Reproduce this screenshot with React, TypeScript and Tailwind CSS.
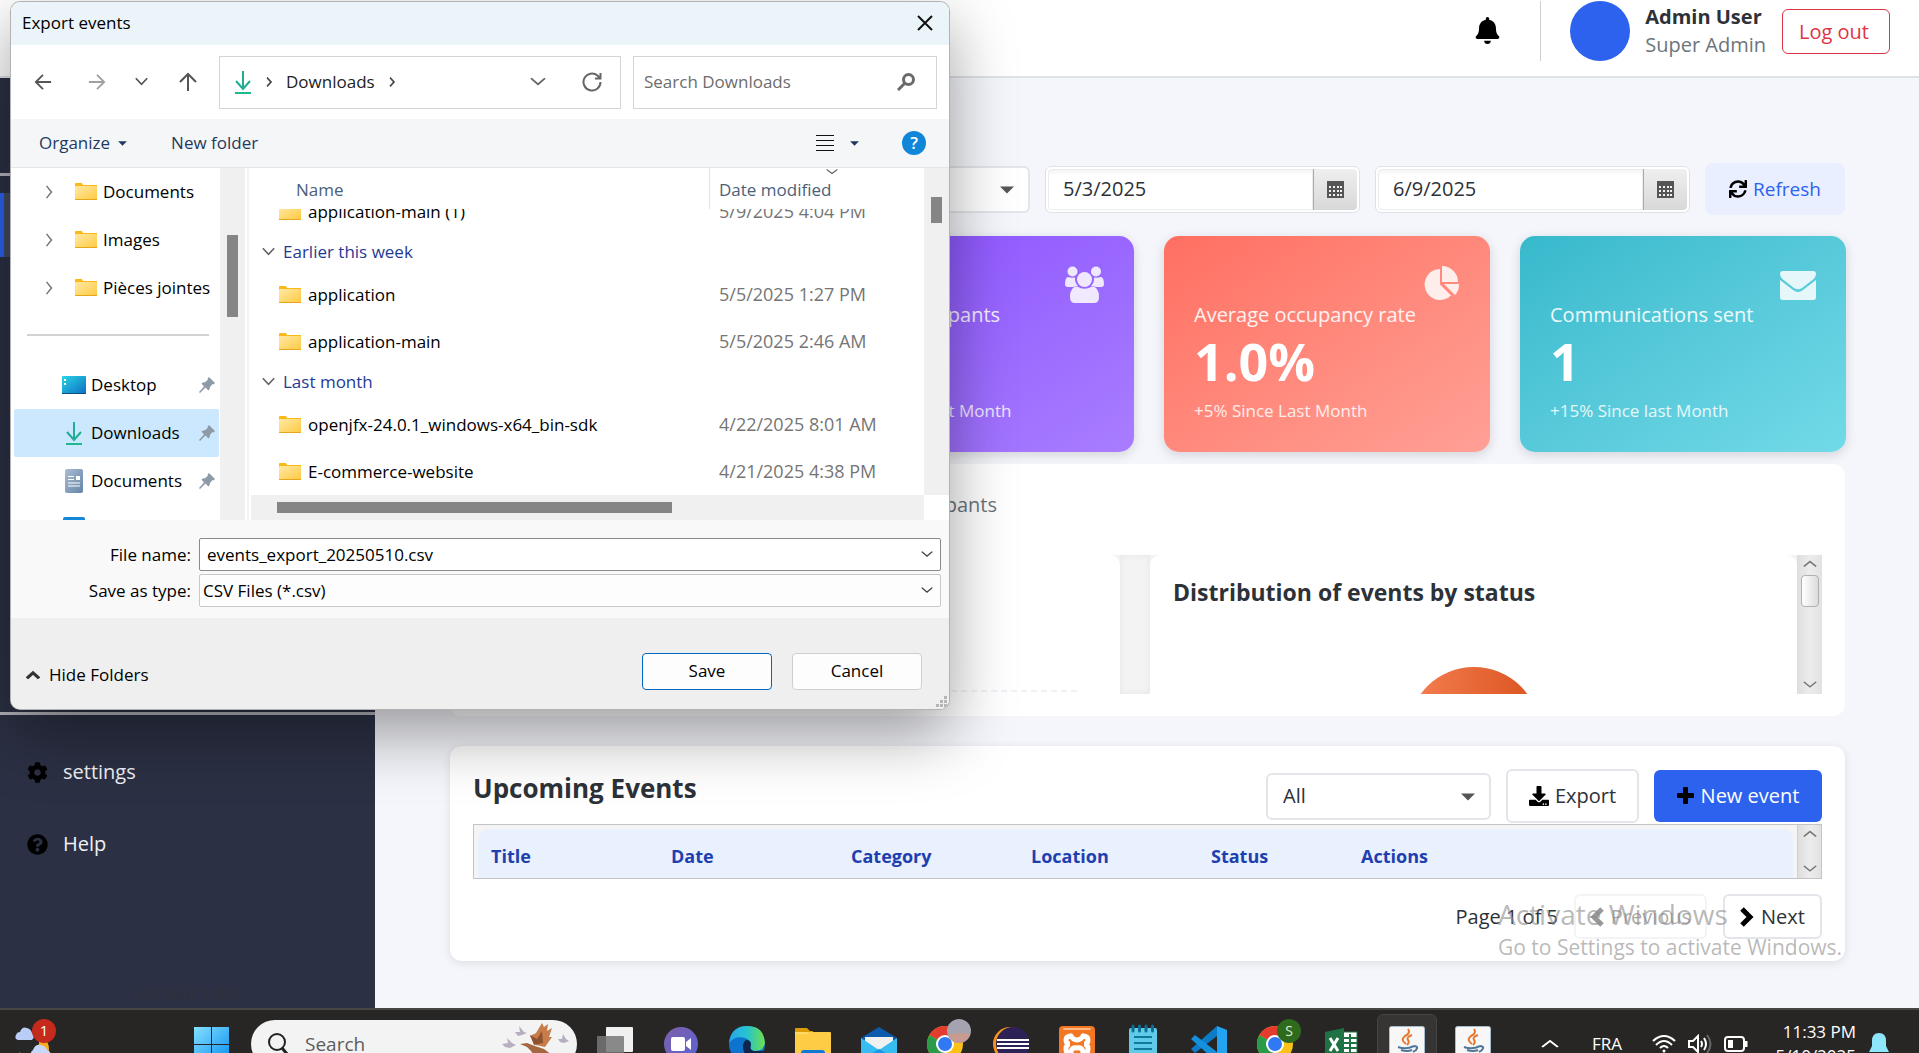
import React from "react";
import { FaBell, FaSync, FaDownload, FaCog, FaQuestionCircle } from "react-icons/fa";

type IconProps = { className?: string };

/* ---------- small glyphs ---------- */

function Chevron({ dir, className = "", stroke = 1 }: { dir: "up" | "down" | "right"; className?: string; stroke?: number }) {
  const d = dir === "down" ? "M1 3 L8 11 L15 3" : dir === "up" ? "M1 12 L8 4 L15 12" : "M4 1 L12 8 L4 15";
  return (
    <svg viewBox="0 0 16 16" className={className} fill="none" stroke="currentColor" strokeWidth={stroke} aria-hidden="true" preserveAspectRatio="none">
      <path d={d} />
    </svg>
  );
}

function BoldChevron({ dir }: { dir: "left" | "right" }) {
  return (
    <svg viewBox="0 0 14 20" className="h-5 w-[14px] text-black" fill="none" stroke="currentColor" strokeWidth="5" strokeLinejoin="miter" aria-hidden="true">
      <path d={dir === "left" ? "M12 2 L4 10 L12 18" : "M2 2 L10 10 L2 18"} />
    </svg>
  );
}

function BoldPlus() {
  return (
    <svg viewBox="0 0 18 18" className="h-[18px] w-[18px] text-black" fill="currentColor" aria-hidden="true">
      <rect x="6" y="0" width="5" height="17" rx="1" />
      <rect x="0" y="6" width="17" height="5" rx="1" />
    </svg>
  );
}

function Caret({ className = "" }: IconProps) {
  return (
    <svg viewBox="0 0 14 8" className={className} fill="currentColor" aria-hidden="true">
      <path d="M0 0.5 H14 L7 7.5 Z" />
    </svg>
  );
}

function Arrow({ rotate = 0, className = "" }: { rotate?: number; className?: string }) {
  return (
    <svg viewBox="0 0 20 20" className={className} fill="none" stroke="currentColor" strokeWidth="2" aria-hidden="true">
      <path transform={`rotate(${rotate} 10 10)`} d="M19 10 H2 M10 2 L2 10 L10 18" />
    </svg>
  );
}

function Folder() {
  return (
    <svg viewBox="0 0 22 18" className="h-[18px] w-[22px] shrink-0" aria-hidden="true">
      <defs>
        <linearGradient id="folderFace" x1="0" y1="0" x2="1" y2="1">
          <stop offset="0" stopColor="#ffe9a6" />
          <stop offset="1" stopColor="#ffc93f" />
        </linearGradient>
      </defs>
      <path d="M0 1 Q0 0 1 0 H7 L8 2 H22 V6 H0Z" fill="#fbb917" />
      <rect x="0" y="3" width="22" height="14" rx="1" fill="url(#folderFace)" />
      <rect x="0" y="16" width="22" height="1" fill="#e8a61c" />
    </svg>
  );
}

function DownloadArrow({ className = "" }: IconProps) {
  return (
    <svg viewBox="0 0 16 23" className={className} fill="none" strokeWidth="2" aria-hidden="true">
      <path d="M8 0 V17 M1 10 L8 18 L15 10" stroke="#1fae93" />
      <path d="M0 22 H16" stroke="#1db98a" />
    </svg>
  );
}

function DesktopIcon() {
  return (
    <svg viewBox="0 0 24 18" className="h-[18px] w-6" aria-hidden="true">
      <defs>
        <linearGradient id="desk" x1="0" y1="0" x2="1" y2="1">
          <stop offset="0" stopColor="#2cd3e4" />
          <stop offset="1" stopColor="#0a6fc4" />
        </linearGradient>
      </defs>
      <rect width="24" height="18" rx="1" fill="url(#desk)" />
      <rect y="17" width="24" height="1" fill="#0b4f86" />
      <path d="M2 3 h2 v2 h-2z M2 7 h2 v2 h-2z" fill="#fff" />
    </svg>
  );
}

function DocIcon() {
  return (
    <svg viewBox="0 0 18 24" className="h-6 w-[18px]" aria-hidden="true">
      <defs>
        <linearGradient id="doc" x1="0" y1="0" x2="1" y2="1">
          <stop offset="0" stopColor="#a9bdd2" />
          <stop offset="1" stopColor="#6585a8" />
        </linearGradient>
      </defs>
      <rect width="18" height="24" rx="2" fill="url(#doc)" />
      <path d="M3 7.5h6M3 10.5h6M3 14h12M3 17h12" stroke="#fff" />
      <rect x="11" y="7" width="4" height="4" fill="#fff" />
    </svg>
  );
}

function Pin() {
  return (
    <svg viewBox="0 0 16 16" className="h-4 w-4" fill="#8e9ba6" aria-hidden="true">
      <path d="M10 0 L16 6 L14.500 7.500 L13.500 7 L11 10 Q11 12 9.500 13.500 L6.500 10.500 L1 16 L0 15 L5 9.500 L2.500 6.500 Q4 5 6 5.200 L9 2.500 L8.500 1.500Z" />
    </svg>
  );
}

function CalendarIcon() {
  return (
    <svg viewBox="0 0 17 17" className="h-[17px] w-[17px]" aria-hidden="true">
      <rect width="17" height="17" fill="#555" />
      <g fill="#f2f2f2">
        {[5, 9, 13].map((y) => [2, 6, 10, 13].map((x) => <rect key={`${x}-${y}`} x={x} y={y} width="2" height="2" />))}
      </g>
    </svg>
  );
}

/* ---------- stat card drawings ---------- */

function PeopleIcon() {
  return (
    <svg viewBox="0 0 39 37" className="h-[37px] w-[39px]" fill="currentColor" aria-hidden="true">
      <circle cx="7.500" cy="5.500" r="5" />
      <circle cx="31" cy="5.500" r="5" />
      <circle cx="19.500" cy="13.500" r="7.500" />
      <path d="M3 11 Q6 12 10 11.500 Q9.500 17 13 20 Q10 20.500 8 21 H3 Q0 21 0 18 Q0 12 3 11Z" />
      <path d="M36 11 Q33 12 29 11.500 Q29.500 17 26 20 Q29 20.500 31 21 H36 Q39 21 39 18 Q39 12 36 11Z" />
      <path d="M12 20.500 Q19.500 25 27 20.500 Q34 21 34 31 Q34 37 29 37 H10 Q5 37 5 31 Q5 21 12 20.500Z" />
    </svg>
  );
}

function PieIcon() {
  return (
    <svg viewBox="0 0 36 36" className="h-9 w-9" fill="currentColor" aria-hidden="true">
      <path d="M16 3 A15.500 15.500 0 1 0 27 29.500 L16 18.500Z" />
      <path d="M18 0 A16 16 0 0 1 34 16 H18Z" />
      <path d="M20 18 H35 A15 15 0 0 1 31 29Z" />
    </svg>
  );
}

function MailIcon() {
  return (
    <svg viewBox="0 0 36 36" className="h-9 w-9" fill="currentColor" aria-hidden="true">
      <path d="M3 5 H33 Q36 5 36 8 Q36 11 33 13.500 L22 22 Q18 24.500 14 22 L3 13.500 Q0 11 0 8 Q0 5 3 5Z" />
      <path d="M0 14 L13 24 Q18 28 23 24 L36 14 V31 Q36 34 33 34 H3 Q0 34 0 31Z" />
    </svg>
  );
}

/* ---------- dashboard ---------- */

function Header() {
  return (
    <header className="flex h-[78px] shrink-0 items-start justify-end border-b-2 border-[#dfe2e6] bg-white pr-[29px] pt-px">
      <button type="button" aria-label="Notifications" className="mr-10 mt-4 text-black">
        <FaBell className="h-[27px] w-[25px]" />
      </button>
      <div className="mr-[29px] h-[60px] w-px bg-[#cfcfcf]" />
      <div className="h-[60px] w-[60px] rounded-full bg-[#2c62ee]" />
      <div className="ml-[15px] text-[20px] leading-7">
        <p className="mt-0.5 font-bold text-[#2d3138]">Admin User</p>
        <p className="text-[#6c757d]">Super Admin</p>
      </div>
      <button type="button" className="ml-4 mt-2 h-[45px] w-[108px] rounded-md border border-[#dc3545] pr-1 text-[20px] text-[#dc3545]">
        Log out
      </button>
    </header>
  );
}

function Sidebar() {
  return (
    <nav className="flex w-[375px] shrink-0 flex-col bg-[#2b3044] text-[20px] text-[#f0f1f4]">
      <div className="mt-[95px] h-[3px] bg-[#b3b5bb]" />
      <div className="mt-[17px] h-16 border-l-4 border-[#2c62ee] bg-[#434860]" />
      <div className="mb-[21px] mt-auto h-[3px] shrink-0 bg-[#b3b5bb]" />
      <a href="#settings" className="flex h-[72px] shrink-0 items-center gap-[15px] pl-[27px]">
        <FaCog className="h-[21px] w-[21px] text-black" />
        settings
      </a>
      <a href="#help" className="flex h-[72px] shrink-0 items-center gap-[15px] pl-[27px]">
        <FaQuestionCircle className="h-[21px] w-[21px] text-black" />
        Help
      </a>
      <p className="mt-[100px] pb-px text-center text-[17px] leading-[27px] text-[#2d3138]">Version 1.0.0</p>
    </nav>
  );
}

function Combo({ label, value, options }: { label: string; value: string; options: string[] }) {
  return (
    <div className="relative w-[225px]">
      <select
        aria-label={label}
        defaultValue={value}
        className="h-[47px] w-full appearance-none rounded-md border-2 border-[#e3e5ea] bg-white px-[15px] text-[20px] text-[#2d3138]"
      >
        {options.map((o) => (
          <option key={o}>{o}</option>
        ))}
      </select>
      <Caret className="pointer-events-none absolute right-4 top-5 h-2 w-[14px] text-[#555]" />
    </div>
  );
}

function DateField({ label, value }: { label: string; value: string }) {
  return (
    <div className="flex h-[47px] w-[315px] rounded-md border border-[#dee2e8] bg-white p-0.5">
      <input
        aria-label={label}
        defaultValue={value}
        className="min-w-0 flex-1 rounded-l border border-[#ececec] bg-linear-to-b from-[#f4f4f4] from-0% to-white to-15% px-[14px] text-[20px] text-[#2d3138]"
      />
      <button
        type="button"
        aria-label={`${label} calendar`}
        className="flex w-11 items-center justify-center rounded-r border-l border-[#aaa] bg-linear-to-b from-[#efefef] to-[#d8d8d8]"
      >
        <CalendarIcon />
      </button>
    </div>
  );
}

function StatCard({ title, value, note, tone, icon }: { title: string; value: string; note: string; tone: string; icon: React.ReactNode }) {
  return (
    <article className={`rounded-[15px] px-[30px] pb-7 pt-[30px] text-white shadow-[0_3px_12px_rgba(0,0,0,0.14)] ${tone}`}>
      <div className="flex h-9 justify-end text-white/85">{icon}</div>
      <h3 className="text-[20px] leading-[26px] text-white/90">{title}</h3>
      <p className="text-[52px] font-bold leading-[66px]">{value}</p>
      <p className="mt-1 text-[17px] leading-[26px] text-white/85">{note}</p>
    </article>
  );
}

function ChartsPanel() {
  return (
    <section className="mr-px mt-3 rounded-xl bg-white px-[23px] pb-[22px]">
      <div className="flex h-[91px] w-[524px] items-start justify-end gap-10 pt-7 text-[20px] leading-[26px] text-[#6c757d]">
        <span>Events</span>
        <span>Participants</span>
      </div>
      <div className="flex h-[139px] overflow-hidden bg-[#f3f3f3]">
        <div className="flex flex-1 items-end rounded-t-[10px] bg-white pb-[2px] pl-10 pr-[43px]">
          <div className="h-0 flex-1 border-t-2 border-dashed border-[#f0f0f6]" />
        </div>
        <div className="w-[30px] shadow-[inset_0_0_6px_rgba(0,0,0,0.06)]" />
        <div className="flex w-[647px] flex-col rounded-t-[10px] bg-white px-[23px] pt-[21px]">
          <h3 className="text-[23px] font-bold leading-8 text-[#2d3138]">Distribution of events by status</h3>
          <svg viewBox="0 0 132 132" className="mt-[59px] h-[132px] w-[132px] shrink-0 self-center" role="img" aria-label="Events by status">
            <defs>
              <linearGradient id="pie" x1="0" y1="0" x2="1" y2="0">
                <stop offset="0" stopColor="#f57f52" />
                <stop offset="1" stopColor="#d9531e" />
              </linearGradient>
            </defs>
            <circle cx="66" cy="66" r="66" fill="url(#pie)" />
          </svg>
        </div>
        <div className="flex w-[25px] flex-col items-center bg-linear-to-r from-[#dedede] via-[#ececec] to-[#e2e2e2] py-1 text-[#777]">
          <Chevron dir="up" className="h-[10px] w-[14px]" stroke={2} />
          <div className="mt-[6px] h-8 w-[18px] rounded border border-[#b0b0b0] bg-linear-to-r from-white to-[#dcdcdc]" />
          <Chevron dir="down" className="mt-auto h-[10px] w-[14px]" stroke={2} />
        </div>
      </div>
    </section>
  );
}

const columns: [string, string][] = [
  ["Title", "w-[180px]"],
  ["Date", "w-[180px]"],
  ["Category", "w-[180px]"],
  ["Location", "w-[180px]"],
  ["Status", "w-[150px]"],
  ["Actions", ""],
];

function EventsPanel() {
  return (
    <section className="mr-px mt-[30px] rounded-xl bg-white px-[23px] pb-[22px] pt-[23px] shadow-[0_2px_10px_rgba(0,0,0,0.1)]">
      <div className="flex items-center gap-[15px]">
        <h2 className="mr-auto self-start text-[26px] font-bold leading-[38px] text-[#2d3138]">Upcoming Events</h2>
        <Combo label="Category filter" value="All" options={["All"]} />
        <button type="button" className="flex h-[54px] w-[133px] items-center justify-center gap-1.5 rounded-md border-2 border-[#e3e5ea] text-[20px] text-[#2d3138]">
          <FaDownload className="h-5 w-5 text-black" />
          Export
        </button>
        <button type="button" className="flex h-[52px] w-[168px] items-center justify-center gap-1.5 rounded-md bg-[#2c62ee] text-[20px] text-white">
          <BoldPlus />
          New event
        </button>
      </div>
      <div className="mt-px flex h-[55px] overflow-hidden border border-[#c4c4c4] bg-[#f4f4f4]">
        <div className="flex-1 overflow-hidden pl-1 pr-[4px] pt-[4px]">
          <div className="overflow-hidden rounded-t-[10px] bg-[#e9f0fe]">
            <table className="h-[55px] w-full table-fixed text-left text-[18px] text-[#1e40af]">
              <thead>
                <tr>
                  {columns.map(([name, width]) => (
                    <th key={name} scope="col" className={`pl-[13px] font-bold ${width}`}>
                      {name}
                    </th>
                  ))}
                </tr>
              </thead>
            </table>
          </div>
        </div>
        <div className="flex w-6 flex-col items-center justify-between border-l border-[#d0d0d0] bg-linear-to-r from-[#dedede] via-[#ececec] to-[#e2e2e2] py-1 text-[#777]">
          <Chevron dir="up" className="h-[10px] w-[14px]" stroke={2} />
          <Chevron dir="down" className="h-[10px] w-[14px]" stroke={2} />
        </div>
      </div>
      <div className="mt-[15px] flex items-center justify-end gap-4 text-[20px] text-[#2d3138]">
        <span>Page 1 of 5</span>
        <button type="button" disabled className="flex h-[45px] w-[133px] items-center justify-center gap-[7px] rounded-md border-2 border-[#e3e5ea] opacity-40">
          <BoldChevron dir="left" />
          Previous
        </button>
        <button type="button" className="flex h-[45px] w-[99px] items-center justify-center gap-[7px] rounded-md border-2 border-[#e3e5ea]">
          <BoldChevron dir="right" />
          Next
        </button>
      </div>
    </section>
  );
}

function Dashboard() {
  return (
    <main className="min-w-0 flex-1 bg-[#f5f6fb] pl-[75px] pr-[73px] pt-[85px]">
      <div className="mr-px flex items-center justify-end gap-[15px]">
        <Combo label="Period" value="All periods" options={["All periods"]} />
        <DateField label="From" value="5/3/2025" />
        <DateField label="To" value="6/9/2025" />
        <button type="button" className="flex h-[52px] w-[140px] items-center justify-center gap-1.5 rounded-lg bg-[#e9effe] text-[19px] text-[#2c62ee]">
          <FaSync className="h-[18px] w-[18px] text-black" />
          Refresh
        </button>
      </div>
      <div className="ml-0.5 mt-[21px] grid grid-cols-4 gap-[30px]">
        <StatCard title="Total events" value="5" note="+12% Since Last Month" tone="bg-linear-to-br from-[#2c62ee] to-[#6a93f8]" icon={null} />
        <StatCard title="Total participants" value="1" note="+8% Since Last Month" tone="bg-linear-to-br from-[#8a4dff] to-[#a97dff]" icon={<PeopleIcon />} />
        <StatCard title="Average occupancy rate" value="1.0%" note="+5% Since Last Month" tone="bg-linear-to-br from-[#ff6f61] to-[#ffa096]" icon={<PieIcon />} />
        <StatCard title="Communications sent" value="1" note="+15% Since last Month" tone="bg-linear-to-br from-[#36b9cc] to-[#72dae8]" icon={<MailIcon />} />
      </div>
      <ChartsPanel />
      <EventsPanel />
    </main>
  );
}

/* ---------- save dialog ---------- */

function TreeRow({ children, selected = false, chevron = false }: { children: React.ReactNode; selected?: boolean; chevron?: boolean }) {
  return (
    <button
      type="button"
      className={`flex h-12 w-full shrink-0 items-center rounded-xs whitespace-nowrap ${selected ? "bg-[#cce8ff]" : ""} ${chevron ? "pl-[30px]" : "pl-12"}`}
    >
      {children}
    </button>
  );
}

function FolderTree() {
  return (
    <div className="flex w-[209px] shrink-0 flex-col overflow-hidden pl-[3px] pr-px">
      {["Documents", "Images", "Pièces jointes"].map((name) => (
        <TreeRow key={name} chevron>
          <Chevron dir="right" className="mr-[21px] h-[14px] w-[10px] text-[#777]" stroke={2} />
          <Folder />
          <span className="ml-1.5">{name}</span>
        </TreeRow>
      ))}
      <div className="mb-[25px] ml-[13px] mr-[10px] mt-[22px] h-0.5 shrink-0 bg-[#d2d2d2]" />
      {[
        { name: "Desktop", icon: <DesktopIcon />, selected: false },
        { name: "Downloads", icon: <DownloadArrow className="h-[23px] w-4" />, selected: true },
        { name: "Documents", icon: <DocIcon />, selected: false },
      ].map((r) => (
        <TreeRow key={r.name} selected={r.selected}>
          <span className="flex w-6 justify-center">{r.icon}</span>
          <span className="ml-[5px]">{r.name}</span>
          <span className="ml-auto mr-1">
            <Pin />
          </span>
        </TreeRow>
      ))}
      <div className="ml-[49px] mt-3 h-5 w-[22px] shrink-0 rounded-xs bg-[#1488d8]" />
    </div>
  );
}

function FileRow({ name, date }: { name: string; date: string }) {
  return (
    <div className="flex h-[47px] shrink-0 items-center pl-7">
      <Folder />
      <span className="ml-[7px] w-[411px]">{name}</span>
      <span className="text-[18px] text-[#757575]">{date}</span>
    </div>
  );
}

function GroupRow({ name }: { name: string }) {
  return (
    <div className="flex h-9 shrink-0 items-center gap-2 pb-0.5 pl-[11px] text-[#1f3a93]">
      <Chevron dir="down" className="h-3 w-[13px] text-[#666]" stroke={2} />
      {name}
    </div>
  );
}

function FileList() {
  return (
    <div className="flex min-w-0 flex-1">
      <div className="flex min-w-0 flex-1 flex-col">
        <div className="flex h-[41px] shrink-0 text-[#4c607a]">
          <div className="w-[459px] border-r border-[#e2e2e2] pl-[45px] pt-[9px]">Name</div>
          <div className="relative flex-1 pl-[9px] pt-[9px]">
            Date modified
            <Chevron dir="down" className="absolute left-[116px] top-0 h-2 w-3 text-[#555]" stroke={2} />
          </div>
        </div>
        <div className="flex min-h-0 flex-1 flex-col justify-end overflow-hidden">
          <FileRow name="application-main (1)" date="5/9/2025 4:04 PM" />
          <GroupRow name="Earlier this week" />
          <FileRow name="application" date="5/5/2025 1:27 PM" />
          <FileRow name="application-main" date="5/5/2025 2:46 AM" />
          <GroupRow name="Last month" />
          <FileRow name="openjfx-24.0.1_windows-x64_bin-sdk" date="4/22/2025 8:01 AM" />
          <FileRow name="E-commerce-website" date="4/21/2025 4:38 PM" />
        </div>
        <div className="flex h-[25px] shrink-0 items-center bg-[#f0f0f0] pl-[26px]">
          <div className="h-[11px] w-[395px] bg-[#858585]" />
        </div>
      </div>
      <div className="mb-[25px] w-[25px] shrink-0 bg-[#f0f0f0] pl-[7px] pt-[29px]">
        <div className="h-[26px] w-[11px] bg-[#858585]" />
      </div>
    </div>
  );
}

function SaveDialog() {
  return (
    <div
      role="dialog"
      aria-label="Export events"
      className="absolute left-2.5 top-px flex w-[940px] flex-col overflow-hidden rounded-[10px] border border-black/30 bg-white text-[17px] text-black shadow-[0_24px_64px_rgba(0,0,0,0.38)]"
    >
      <div className="flex h-[43px] items-center justify-between bg-[#ebf4f8] pb-0.5 pl-[11px] pr-4">
        Export events
        <button type="button" aria-label="Close">
          <svg viewBox="0 0 16 16" className="h-4 w-4" stroke="#111" strokeWidth="2" aria-hidden="true">
            <path d="M1 1 L15 15 M15 1 L1 15" />
          </svg>
        </button>
      </div>

      <div className="flex h-[74px] items-center pl-[23px] pr-3">
        <button type="button" aria-label="Back" className="text-[#555]"><Arrow className="h-[18px] w-[18px]" /></button>
        <button type="button" aria-label="Forward" className="ml-9 text-[#a0a0a0]"><Arrow rotate={180} className="h-[18px] w-[18px]" /></button>
        <button type="button" aria-label="Recent" className="ml-[29px] text-[#555]"><Chevron dir="down" className="h-3 w-[13px]" stroke={2} /></button>
        <button type="button" aria-label="Up" className="ml-[30px] text-[#555]"><Arrow rotate={90} className="h-5 w-5" /></button>
        <div className="ml-[21px] flex h-[53px] w-[402px] items-center border border-[#d5d5d5] pl-[15px]">
          <DownloadArrow className="h-[23px] w-4" />
          <Chevron dir="right" className="ml-[14px] h-[10px] w-[8px] text-[#444]" stroke={3} />
          <span className="ml-[13px] text-[#222]">Downloads</span>
          <Chevron dir="right" className="ml-[13px] h-[10px] w-[8px] text-[#444]" stroke={3} />
          <Chevron dir="down" className="ml-auto h-3 w-4 text-[#666]" stroke={2} />
          <button type="button" aria-label="Refresh folder" className="ml-9 mr-[18px]">
            <svg viewBox="0 0 20 20" className="h-5 w-5" fill="none" stroke="#666" strokeWidth="2" aria-hidden="true">
              <path d="M18.500 10 A8.500 8.500 0 1 1 15.500 3.500 L18 6 M18.500 1 V6.500 H13" />
            </svg>
          </button>
        </div>
        <label className="ml-3 flex h-[53px] flex-1 items-center border border-[#d5d5d5] pl-2.5 pr-[21px]">
          <input aria-label="Search Downloads" placeholder="Search Downloads" className="min-w-0 flex-1 bg-transparent text-[17px] outline-none placeholder:text-[#6d6d6d]" />
          <svg viewBox="0 0 18 18" className="h-[18px] w-[18px]" fill="none" stroke="#6a6a6a" aria-hidden="true">
            <circle cx="11.500" cy="6.500" r="5" strokeWidth="3" />
            <path d="M8 10 L1 17" strokeWidth="3" />
          </svg>
        </label>
      </div>

      <div className="flex h-[49px] items-center border-b border-[#e5e5e5] bg-[#f4f6f8] pl-7 pr-[23px] text-[#1f3a5f]">
        <button type="button" className="flex items-center gap-2">
          Organize
          <Caret className="h-[5px] w-[9px]" />
        </button>
        <button type="button" className="ml-[44px]">New folder</button>
        <button type="button" aria-label="View" className="ml-auto flex items-center gap-4">
          <svg viewBox="0 0 18 17" className="h-[17px] w-[18px]" stroke="#111" aria-hidden="true">
            <path d="M0 .5H18M0 5.500H18M0 10.500H18M0 15.500H18" />
          </svg>
          <Caret className="h-[5px] w-[9px]" />
        </button>
        <button type="button" aria-label="Help" className="ml-[43px] flex h-6 w-6 items-center justify-center rounded-full bg-[#0f86d8] text-[17px] font-semibold text-white">
          ?
        </button>
      </div>

      <div className="flex h-[352px]">
        <FolderTree />
        <div className="w-[25px] shrink-0 bg-[#f0f0f0] pl-[7px] pt-[67px]">
          <div className="h-[82px] w-[11px] bg-[#858585]" />
        </div>
        <div className="mx-0.5 w-0.5 shrink-0 bg-[#f3f3f3]" />
        <FileList />
      </div>

      <div className="flex flex-col gap-[3px] bg-[#f9f9f9] pb-[11px] pl-[39px] pr-2 pt-[18px]">
        <div className="flex items-center">
          <label htmlFor="filename" className="w-[149px] pr-2 text-right">File name:</label>
          <div className="relative flex-1">
            <input id="filename" defaultValue="events_export_20250510.csv" className="h-[33px] w-full rounded-xs border border-[#8a8a8a] bg-white px-[7px]" />
            <Chevron dir="down" className="pointer-events-none absolute right-2 top-3 h-[9px] w-3 text-[#444]" stroke={2} />
          </div>
        </div>
        <div className="flex items-center">
          <label htmlFor="filetype" className="w-[149px] pr-2 text-right">Save as type:</label>
          <div className="relative flex-1">
            <select id="filetype" className="h-[33px] w-full appearance-none rounded-xs border border-[#c8c8c8] bg-[#fdfdfd] px-[3px]">
              <option>CSV Files (*.csv)</option>
            </select>
            <Chevron dir="down" className="pointer-events-none absolute right-2 top-3 h-[9px] w-3 text-[#444]" stroke={2} />
          </div>
        </div>
      </div>

      <div className="relative flex h-[91px] items-center bg-[#efefef] pl-[15px] pr-[27px] pt-[15px]">
        <button type="button" className="flex items-center gap-[9px] pt-2">
          <Chevron dir="up" className="h-[11px] w-[14px] text-[#333]" stroke={4} />
          Hide Folders
        </button>
        <button type="button" className="ml-auto h-[37px] w-[130px] rounded border border-[#0067c0] bg-[#fdfdfd]">Save</button>
        <button type="button" className="ml-5 h-[37px] w-[130px] rounded border border-[#cfcfcf] bg-[#fdfdfd]">Cancel</button>
        <svg viewBox="0 0 11 11" className="absolute bottom-0.5 right-0.5 h-[11px] w-[11px]" fill="#b5b5b5" aria-hidden="true">
          <path d="M8 0h3v3h-3z M4 4h3v3h-3z M8 4h3v3h-3z M0 8h3v3h-3z M4 8h3v3h-3z M8 8h3v3h-3z" />
        </svg>
      </div>
    </div>
  );
}

/* ---------- taskbar drawings ---------- */

function Weather() {
  return (
    <svg viewBox="0 0 42 46" className="h-[46px] w-[42px]" aria-hidden="true">
      <circle cx="19" cy="30" r="15" fill="#fbae1d" />
      <circle cx="12" cy="24" r="12" fill="#272727" />
      <path d="M3 21 Q-1 20 1 16 Q2 13 5 13 Q7 7 12 9 Q16 10 17 14 Q21 17 17 21Z" fill="#b9cdf7" />
      <path d="M17 37 Q14 34 18 31 Q20 25 26 26 Q31 27 32 31 Q37 33 35 37Z" fill="#c6d7fa" />
      <circle cx="29" cy="12" r="12" fill="#c42b1c" />
      <text x="29" y="17" textAnchor="middle" fontSize="15" fill="#fff">1</text>
    </svg>
  );
}

function StartLogo() {
  return (
    <svg viewBox="0 0 36 36" className="h-9 w-9" aria-hidden="true">
      <defs>
        <linearGradient id="win" x1="0" y1="0" x2="1" y2="1">
          <stop offset="0" stopColor="#84e0ff" />
          <stop offset="1" stopColor="#0b8fef" />
        </linearGradient>
      </defs>
      <path d="M0 1h17v17H0z M18 1h17v17H18z M0 19h17v17H0z M18 19h17v17H18z" fill="url(#win)" />
    </svg>
  );
}

function Goose() {
  return (
    <svg viewBox="0 0 70 46" className="h-[46px] w-[70px]" aria-hidden="true">
      <g fill="#b7aebf">
        <path d="M15 11 L20 11 L19 5 L24 11 L27 12 L22 14 L18 15Z" />
        <path d="M2 23 L8 22 L7 17 L12 22 L16 24 L10 27 L5 26Z" />
        <path d="M58 18 L62 18 L63 13 L66 18 L69 20 L64 22 L60 21Z" />
      </g>
      <path d="M20 23 L27 22 Q32 24 35 25 L44 28 L52 34 L60 42 L48 44 L38 40 L31 30 L27 26Z" fill="#a5673f" />
      <path d="M30 15 L36 12 L42 2 L44 6 L48 3 L47 10 L52 7 L49 16 L52 16 L45 26 L36 24Z" fill="#c67d4b" />
      <path d="M34 24 L30 14 L37 18 L42 10 L43 22Z" fill="#8f5230" />
      <path d="M52 34 L64 33 L58 38Z" fill="#6d6e80" />
    </svg>
  );
}

function Svg36({ children }: { children: React.ReactNode }) {
  return (
    <svg viewBox="0 0 36 36" className="h-9 w-9" aria-hidden="true" overflow="visible">
      {children}
    </svg>
  );
}

const TaskViewIcon = () => (
  <Svg36>
    <rect x="9" y="1" width="27" height="25" rx="1" fill="#f0f0f0" />
    <rect x="0" y="10" width="27" height="25" rx="1" fill="#777" opacity="0.85" />
  </Svg36>
);
const MeetIcon = () => (
  <Svg36>
    <defs>
      <linearGradient id="meet" x1="0" y1="0" x2="1" y2="1">
        <stop offset="0" stopColor="#7d5fa8" />
        <stop offset="1" stopColor="#5a63d6" />
      </linearGradient>
    </defs>
    <circle cx="18" cy="18" r="17" fill="url(#meet)" />
    <rect x="8" y="11" width="14" height="14" rx="2" fill="#fff" />
    <path d="M23 16 L28 12 V24 L23 20Z" fill="#fff" />
  </Svg36>
);
const EdgeIcon = () => (
  <Svg36>
    <defs>
      <linearGradient id="edgeA" x1="0" y1="0" x2="1" y2="0">
        <stop offset="0" stopColor="#2aa4ea" />
        <stop offset="0.5" stopColor="#27c3cf" />
        <stop offset="1" stopColor="#6ee04a" />
      </linearGradient>
    </defs>
    <circle cx="18" cy="18" r="18" fill="#0c74cf" />
    <path d="M0 17 Q2 0 18 0 Q35 0 36 17 Q35 25 25 25 Q20 24 22 19 Q22 14 16 12 Q6 9 0 17Z" fill="url(#edgeA)" />
    <path d="M22 19 Q22 14 17 14 Q12 18 15 26 Q18 32 27 31 L36 25 L25 25 Q20 24 22 19Z" fill="#10254a" />
  </Svg36>
);
const ExplorerIcon = () => (
  <Svg36>
    <path d="M0 3 Q0 2 1 2 H12 L15 5 H18 V9 H0Z" fill="#dc9a06" />
    <rect y="6" width="36" height="28" rx="1" fill="#ffcd45" />
    <path d="M0 8 H12 L15 6 H0Z" fill="#ffd968" />
    <rect x="6" y="24" width="24" height="12" rx="3" fill="#0f78d4" />
  </Svg36>
);
const MailAppIcon = () => (
  <Svg36>
    <path d="M0 12 L18 1 L36 12 V20 H0Z" fill="#0b5cad" />
    <path d="M4 11 H32 V24 H4Z" fill="#f1f1f1" />
    <path d="M0 12 L18 24 L36 12 V34 H0Z" fill="#37bdf2" />
    <path d="M0 34 L18 23 L36 34Z" fill="#1b97e3" />
  </Svg36>
);
const ChromeIcon = ({ badge }: { badge: React.ReactNode }) => (
  <Svg36>
    <circle cx="18" cy="18" r="18" fill="#fbc116" />
    <path d="M18 18 L2.400 9 A18 18 0 0 1 33.600 9Z" fill="#e33b2e" />
    <path d="M18 18 L2.400 9 A18 18 0 0 0 18 36Z" fill="#2a9b48" />
    <circle cx="18" cy="18" r="9" fill="#fff" />
    <circle cx="18" cy="18" r="7" fill="#3079f2" />
    {badge}
  </Svg36>
);
const EclipseIcon = () => (
  <Svg36>
    <circle cx="17" cy="18" r="17" fill="#f7941e" />
    <circle cx="20" cy="18" r="17" fill="#2c2255" />
    <path d="M4 14 H36 M4 18 H36 M4 22 H36" stroke="#fff" strokeWidth="2" />
  </Svg36>
);
const XamppIcon = () => (
  <Svg36>
    <rect width="36" height="36" rx="4" fill="#f37623" />
    <rect x="4" y="2" width="28" height="2" rx="1" fill="#ffb884" />
    <path
      d="M12 10 q-5 0 -5 4 q0 4 4 4 q-4 0 -4 5 q0 5 6 5 M24 10 q5 0 5 4 q0 4 -4 4 q4 0 4 5 q0 5 -6 5 M12 10 q2 4 6 4 q4 0 6 -4 M12 27 q0 -6 6 -5 q6 -1 6 5"
      fill="none"
      stroke="#fff"
      strokeWidth="5"
      strokeLinecap="round"
    />
  </Svg36>
);
const NotepadIcon = () => (
  <Svg36>
    <rect x="4" y="2" width="28" height="34" rx="2" fill="#5fcbe8" />
    <path d="M8 0v5M14.500 0v5M21 0v5M27.500 0v5" stroke="#0d6f93" strokeWidth="3" strokeLinecap="round" />
    <path d="M9 11H27M9 17H27M9 23H27M9 29H27" stroke="#10789c" strokeWidth="2" />
  </Svg36>
);
const CodeIcon = () => (
  <Svg36>
    <path d="M26 0 L36 4 V32 L26 36Z" fill="#22a4f1" />
    <path d="M26 0 V10 L4 27 L0 23Z" fill="#0d7bc7" />
    <path d="M26 36 V26 L4 9 L0 13Z" fill="#1590dd" />
  </Svg36>
);
const ExcelIcon = () => (
  <Svg36>
    <rect x="14" y="6" width="20" height="27" fill="#fff" stroke="#1f7244" strokeWidth="1" />
    <path d="M20 8v24M27 8v24M14 12h20M14 17h20M14 22h20M14 27h20" stroke="#1f7244" strokeWidth="2" />
    <path d="M2 6 L21 2 V36 L2 33Z" fill="#1f7244" />
    <path d="M7 12 L15 25 M15 12 L7 25" stroke="#fff" strokeWidth="3" />
  </Svg36>
);
const JavaIcon = () => (
  <Svg36>
    <rect x="0.500" y="0.500" width="35" height="35" rx="2" fill="#f7f7f7" stroke="#a8bccb" />
    <path d="M19 3 Q22 7 16 10 Q11 14 17 18 M23 9 Q17 11 19 14 Q21 16 18 19" fill="none" stroke="#e8762d" strokeWidth="2" />
    <path d="M9 21 Q17 24 25 20 M12 24 Q18 26 23 24 M25 20 Q30 20 27 24 L24 26 M8 29 Q18 33 28 28" fill="none" stroke="#4d7698" strokeWidth="2" />
  </Svg36>
);

const apps: { name: string; icon: React.ReactNode; active?: boolean }[] = [
  { name: "Task view", icon: <TaskViewIcon /> },
  { name: "Meetings", icon: <MeetIcon /> },
  { name: "Edge", icon: <EdgeIcon /> },
  { name: "File Explorer", icon: <ExplorerIcon /> },
  { name: "Mail", icon: <MailAppIcon /> },
  {
    name: "Chrome",
    icon: (
      <ChromeIcon
        badge={
          <g>
            <circle cx="32" cy="5" r="12" fill="#a5a3b0" />
            <path d="M21 9 Q28 6 43 8 Q40 17 32 17 Q24 17 21 9Z" fill="#c99a90" />
          </g>
        }
      />
    ),
  },
  { name: "Eclipse", icon: <EclipseIcon /> },
  { name: "XAMPP", icon: <XamppIcon /> },
  { name: "Notepad", icon: <NotepadIcon /> },
  { name: "VS Code", icon: <CodeIcon /> },
  {
    name: "Chrome profile S",
    icon: (
      <ChromeIcon
        badge={
          <g>
            <circle cx="32" cy="5" r="12" fill="#2f6b1c" />
            <text x="32" y="10" textAnchor="middle" fontSize="14" fill="#dfe8da">S</text>
          </g>
        }
      />
    ),
  },
  { name: "Excel", icon: <ExcelIcon /> },
  { name: "Java", icon: <JavaIcon />, active: true },
  { name: "Java 2", icon: <JavaIcon /> },
];

function Taskbar() {
  return (
    <footer className="h-[45px] shrink-0 overflow-hidden border-t-2 border-[#464646] bg-[#272625] text-white">
      <div className="flex h-[68px] items-center">
        <button type="button" aria-label="Weather" className="ml-[15px] w-[42px] pb-1"><Weather /></button>
        <button type="button" aria-label="Start" className="ml-[137px]"><StartLogo /></button>
        <label className="ml-[21px] flex h-12 w-[326px] items-center overflow-hidden rounded-full bg-[#f3f3f3] pl-4 pr-[7px]">
          <svg viewBox="0 0 22 24" className="h-6 w-[22px]" fill="none" stroke="#222" strokeWidth="2" aria-hidden="true">
            <circle cx="10" cy="10" r="8" />
            <path d="M15 16 L20 22" strokeWidth="3" />
          </svg>
          <input aria-label="Search" placeholder="Search" className="ml-4 min-w-0 flex-1 bg-transparent text-[19px] text-[#444] outline-none placeholder:text-[#5c5c5c]" />
          <Goose />
        </label>
        <div className="ml-[5px] flex">
          {apps.map((a) => (
            <div key={a.name} className="flex w-[66px] justify-center">
              <button
                type="button"
                aria-label={a.name}
                className={`flex h-[60px] w-[60px] items-center justify-center rounded-md ${a.active ? "border border-[#444] bg-[#363534]" : ""}`}
              >
                {a.icon}
              </button>
            </div>
          ))}
        </div>
        <div className="ml-auto mr-[30px] flex items-center">
          <Chevron dir="up" className="h-3 w-[18px]" stroke={2} />
          <span className="ml-[33px] w-[34px] text-[17px]">FRA</span>
          <svg viewBox="0 0 24 18" className="ml-[26px] h-[18px] w-6" fill="none" stroke="#fff" strokeWidth="2" aria-hidden="true">
            <path d="M1 6 Q12 -4 23 6 M4 10 Q12 2 20 10 M8 13 Q12 9 16 13" />
            <circle cx="12" cy="16" r="1.500" fill="#fff" stroke="none" />
          </svg>
          <svg viewBox="0 0 24 20" className="ml-3 h-5 w-6" fill="none" stroke="#fff" strokeWidth="2" aria-hidden="true">
            <path d="M1 7 H5 L10 2 V18 L5 13 H1Z M13 7 Q15 10 13 13 M16 4 Q20 10 16 16" />
            <path d="M19 1 Q26 10 19 19" stroke="#666" />
          </svg>
          <svg viewBox="0 0 24 16" className="ml-3 h-4 w-6" fill="none" stroke="#fff" strokeWidth="2" aria-hidden="true">
            <rect x="1" y="1" width="19" height="14" rx="3" />
            <rect x="4" y="4" width="5" height="8" fill="#fff" stroke="none" />
            <path d="M22 5 V11" strokeWidth="3" />
          </svg>
          <div className="ml-[26px] w-[82px] text-right text-[17px] leading-6">
            <p>11:33 PM</p>
            <p>5/10/2025</p>
          </div>
          <svg viewBox="0 0 20 24" className="ml-[13px] h-6 w-5" fill="#8fe5fb" aria-hidden="true">
            <path d="M10 1 Q17 1 17 9 V14 L20 20 H0 L3 14 V9 Q3 1 10 1Z M7 21 H13 Q12 24 10 24 Q8 24 7 21Z" />
          </svg>
        </div>
      </div>
    </footer>
  );
}

export default function App() {
  return (
    <div className="relative flex h-screen flex-col overflow-hidden bg-[#f5f6fb] font-['Segoe_UI','Open_Sans','Noto_Sans',sans-serif]">
      <Header />
      <div className="flex min-h-0 flex-1 overflow-hidden">
        <Sidebar />
        <Dashboard />
      </div>
      <Taskbar />
      <div className="pointer-events-none absolute bottom-[92px] right-[78px] w-[343px] whitespace-nowrap text-[#8a8a8a]/60">
        <p className="text-[28px] leading-[38px]">Activate Windows</p>
        <p className="text-[21px] leading-7">Go to Settings to activate Windows.</p>
      </div>
      <SaveDialog />
    </div>
  );
}
